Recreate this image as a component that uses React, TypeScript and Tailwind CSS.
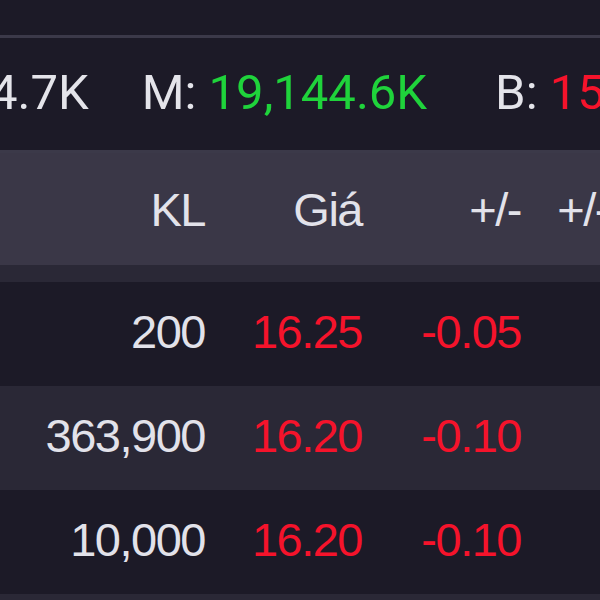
import React from "react";

const rows = [
  { kl: "200", price: "16.25", change: "-0.05", bg: "bg-[#1c1a27]" },
  { kl: "363,900", price: "16.20", change: "-0.10", bg: "bg-[#2a2836]" },
  { kl: "10,000", price: "16.20", change: "-0.10", bg: "bg-[#1c1a27]" },
];

export default function App() {
  return (
    <div className="h-[600px] w-[600px] overflow-hidden bg-[#1c1a27] text-[#e4e4ea]">
      {/* title bar, only the bottom of it is in view */}
      <div className="h-[35px] overflow-hidden">
        <div className="mt-[-52px] flex whitespace-nowrap pl-[274px] font-['Liberation_Sans',Arial,sans-serif] text-[48px] leading-none text-[#d8d8e0]">
          (KL)
        </div>
      </div>
      <div className="h-[3px] bg-[#3b3949]" />

      {/* stats */}
      <div className="flex h-[112px] items-center whitespace-nowrap pb-[4px] font-['Roboto',sans-serif] text-[49px] leading-none">
        <span className="ml-[-10px] shrink-0">4.7K</span>
        <span className="ml-[53px] shrink-0">
          M: <span className="text-[#1fd33b]">19,144.6K</span>
        </span>
        <span className="ml-[68px] shrink-0">
          B: <span className="text-[#f5132b]">15,</span>
        </span>
      </div>
      <div className="h-[3px] bg-[#3b3949]" />

      {/* table */}
      <div className="font-['Liberation_Sans',Arial,sans-serif] text-[47px] leading-none tracking-[-1.5px]">
        <div className="flex h-[112px] items-center whitespace-nowrap bg-[#3a3747] text-[#e2e2ea]">
          <div className="w-[205px] shrink-0 text-right">KL</div>
          <div className="w-[157px] shrink-0 text-right">Giá</div>
          <div className="w-[159px] shrink-0 text-right">+/-</div>
          <div className="w-[88px] shrink-0 text-right">+/-</div>
        </div>
        <div className="h-[17px] bg-[#2a2836]" />
        {rows.map((r, i) => (
          <div
            key={i}
            className={`flex h-[104px] items-center whitespace-nowrap pb-[6px] ${r.bg}`}
          >
            <div className="w-[205px] shrink-0 text-right text-[#e2e2ea]">{r.kl}</div>
            <div className="w-[157px] shrink-0 text-right text-[#f5132b]">{r.price}</div>
            <div className="w-[159px] shrink-0 text-right text-[#f5132b]">{r.change}</div>
          </div>
        ))}
        <div className="h-[10px] bg-[#2a2836]" />
      </div>
    </div>
  );
}
